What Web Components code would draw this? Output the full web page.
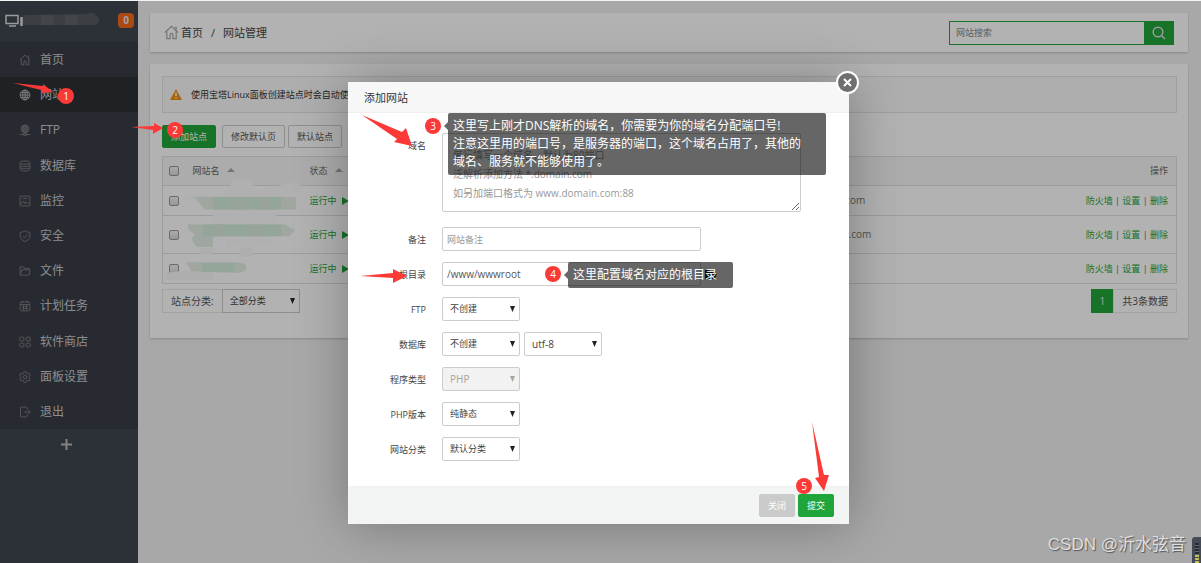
<!DOCTYPE html>
<html lang="zh-CN">
<head>
<meta charset="utf-8">
<title>网站管理</title>
<style>
html,body{margin:0;min-height:100%}
body{font-family:"Open Sans","Noto Sans CJK SC",sans-serif;font-size:9px;color:#333;background:#f1f1f1}
</style>
</head>
<body>
<bt-app></bt-app>
<script>
const define = (name, html, setup) => customElements.define(name, class extends HTMLElement {
  connectedCallback() {
    if (this.shadowRoot) return;
    const t = document.createElement('template');
    t.innerHTML = html;
    this.attachShadow({mode: 'open'}).append(t.content.cloneNode(true));
    if (setup) setup(this, this.shadowRoot);
  }
});

const icons = {
  home: '<path d="M1 8 8 1.500l7 6.500M3 7v7.500h3.500V10.500a1.500 1.500 0 0 1 3 0v4H13V7M11.500 2.500h1.500v2.500"/>',
  globe: '<circle cx="8" cy="8" r="6.500"/><ellipse cx="8" cy="8" rx="3" ry="6.500"/><path d="M1.500 8h13M8 1.500v13M2.500 4.800h11M2.500 11.200h11"/>',
  ftp: '<circle cx="8" cy="6.500" r="5.200"/><ellipse cx="8" cy="6.500" rx="2.400" ry="5.200"/><path d="M3 6.500h10M8 1.500v12M3.500 4h9M3.500 9h9M1 14h5M10 14h5M6 13h4v2H6z"/>',
  data: '<ellipse cx="8" cy="3.500" rx="6.500" ry="2.300"/><path d="M1.500 3.500v9c0 3 13 3 13 0v-9M1.500 6.500c0 3 13 3 13 0M1.500 9.500c0 3 13 3 13 0"/>',
  monitor: '<path d="M1.500 1.500h13v13h-13zM5 4.500h6M1.500 11h3l1.500-3 2 4 2-3 1.500 2h3"/>',
  shield: '<path d="M8 1c2 1.500 4 2 6.500 2v5c0 3.500-2.500 5.500-6.500 7.500C4 13.500 1.500 11.500 1.500 8V3C4 3 6 2.500 8 1zM5 8l2.300 2.300L11.500 6"/>',
  folder: '<path d="M1.500 13.500v-11h4.500l1.500 2h6v2M1.500 13.500l2.300-7h11l-1.300 7z"/>',
  calendar: '<rect x="1.500" y="2.500" width="13" height="12" rx="2"/><path d="M1.500 6h13M5 1v3M11 1v3M4 8.500h8M4 11.500h8M6 7v6M10 7v6"/>',
  grid: '<rect x="1" y="1.500" width="5.500" height="5" rx="1"/><rect x="9.500" y="1.500" width="5.500" height="5" rx="1"/><rect x="1" y="9.500" width="5.500" height="5" rx="1"/><rect x="9.500" y="9.500" width="5.500" height="5" rx="1"/>',
  gear: '<circle cx="8" cy="8" r="2.300"/><path d="M6.500 1h3l.5 2 1.600.8 1.900-1 1.500 2.500L13.500 7v2l1.500 1.700-1.500 2.500-1.900-1L10 13l-.5 2h-3L6 13l-1.600-.8-1.900 1L1 10.700 2.500 9V7L1 5.300l1.500-2.500 1.900 1L6 3z"/>',
  exit: '<path d="M11 5V2.500a1 1 0 0 0-1-1H3a1 1 0 0 0-1 1v11a1 1 0 0 0 1 1h7a1 1 0 0 0 1-1V11M6.500 8H15M12.500 5.500 15 8l-2.500 2.500"/>'
};

define('bt-icon', `<style>
:host{display:inline-flex;width:12px;height:12px;flex:none}
svg{width:100%;height:100%;fill:none;stroke:currentColor;stroke-width:1.300}
</style><svg viewBox="0 0 16 16" aria-hidden="true"></svg>`, (el, r) => {
  r.querySelector('svg').innerHTML = icons[el.getAttribute('name')];
});

define('bt-menu-item', `<style>
:host{display:grid}
a{display:flex;align-items:center;gap:9px;min-height:34px;padding:1px 0 0 19px;color:#c8cace;font-size:12px;line-height:18px;text-decoration:none;background:#383d46}
bt-icon{color:#777b80}
:host([active]) a{background:#2c3136}
:host([active]) bt-icon{color:#b0b3b6}
</style><a href="#"><slot></slot></a>`, (el, r) => {
  const icon = document.createElement('bt-icon');
  icon.setAttribute('name', el.getAttribute('icon'));
  r.querySelector('a').prepend(icon);
});

define('bt-sidebar', `<style>
:host{display:block;background:#40464f;color:#fff}
header{display:flex;align-items:center;height:41px;padding:0 4px 3px 5px;box-sizing:border-box}
.pc{width:20px;height:15px;flex:none}
.mask{width:76px;height:15px;margin-left:-2px}
.badge{margin-left:auto;width:16px;height:15px;border-radius:4px;background:#f5691f;color:#e8e8e8;font-weight:700;font-size:10px;line-height:15px;text-align:center}
nav{display:grid;grid-auto-rows:1fr;min-height:387px}
button{display:block;width:100%;height:32px;padding:0 6px 0 0;border:0;background:none;color:#bbb}
button svg{width:11px;height:11px}
</style>
<header>
<svg class="pc" viewBox="0 0 20 15" fill="none" stroke="#ddd"><path d="M1 2.500h12v8H1zM4 13h7" stroke-width="1.500"/><path d="M16.500 4v9" stroke-width="2.500"/></svg>
<svg class="mask" viewBox="0 0 76 15"><path fill="#555b62" d="M0 2 64 1q1-4 4-4t4 5q4 1 4 5t-4 5H0z"/><path fill="#666b70" d="M18 2h12v10H18zM42 2h12v10H42z" opacity=".6"/></svg>
<span class="badge">0</span>
</header>
<nav>
<bt-menu-item icon="home">首页</bt-menu-item>
<bt-menu-item icon="globe" active>网站</bt-menu-item>
<bt-menu-item icon="ftp">FTP</bt-menu-item>
<bt-menu-item icon="data">数据库</bt-menu-item>
<bt-menu-item icon="monitor">监控</bt-menu-item>
<bt-menu-item icon="shield">安全</bt-menu-item>
<bt-menu-item icon="folder">文件</bt-menu-item>
<bt-menu-item icon="calendar">计划任务</bt-menu-item>
<bt-menu-item icon="grid">软件商店</bt-menu-item>
<bt-menu-item icon="gear">面板设置</bt-menu-item>
<bt-menu-item icon="exit">退出</bt-menu-item>
</nav>
<button aria-label="更多"><svg viewBox="0 0 11 11"><path d="M0 5.500h11M5.500 0v11" stroke="currentColor" stroke-width="2"/></svg></button>`);

define('bt-button', `<style>
:host{display:inline-flex}
button{height:23px;padding:0 8px;border:1px solid #ccc;border-radius:2px;background:#fff;color:#555;font:inherit;line-height:14px;white-space:nowrap}
:host([kind=primary]) button{background:#20a53a;border-color:#20a53a;color:#fff}
:host([kind=muted]) button{background:#cbcbcb;border-color:#cbcbcb;color:#fff}
</style><button type="button"><slot></slot></button>`);

define('bt-select', `<style>
:host{display:inline-grid;position:relative;width:78px;height:24px}
select{appearance:none;width:100%;height:100%;box-sizing:border-box;padding:0 16px 0 7px;border:1px solid #ccc;border-radius:2px;background:#fff;color:#444;font:inherit;line-height:16px;opacity:1}
select:disabled{background:#f2f2f2;color:#aaa69c}
:host([latin]) select{font-size:10px}
:host([square]) select{border-radius:0;border-color:#ccc}
svg{position:absolute;right:5px;top:9px;width:5px;height:6px;fill:#222;pointer-events:none}
:host([disabled]) svg{fill:#aaa69c}
</style><select><option></option></select><svg viewBox="0 0 5 6"><path d="M0 0h5L2.500 6z"/></svg>`, (el, r) => {
  const s = r.querySelector('select');
  s.options[0].textContent = el.getAttribute('value');
  s.setAttribute('aria-label', el.getAttribute('label'));
  s.disabled = el.hasAttribute('disabled');
});

define('bt-topbar', `<style>
:host{display:flex;align-items:center;justify-content:space-between;height:39px;padding:0 14px;background:#fff;box-shadow:0 1px 2px #0003}
nav{display:flex;align-items:center;font-size:11px;line-height:16px;color:#444}
nav a{color:inherit;text-decoration:none}
nav bt-icon{width:15px;height:15px;color:#aaa;margin-right:2px}
nav i{font-style:normal;margin:0 8px}
form{display:flex;height:24px}
input{width:195px;box-sizing:border-box;border:1px solid #20a53a;border-right:0;padding:0 6px;background:#fff;font:inherit;border-radius:0}
input::placeholder{color:#888}
button{width:30px;border:0;padding:0;background:#20a53a;display:grid;place-items:center}
button svg{width:14px;height:14px;fill:none;stroke:#ddd;stroke-width:1.500}
</style>
<nav><bt-icon name="home"></bt-icon><a href="#">首页</a><i>/</i><a href="#">网站管理</a></nav>
<form><input type="text" placeholder="网站搜索" aria-label="网站搜索"><button type="button" aria-label="搜索"><svg viewBox="0 0 14 14"><circle cx="6" cy="6" r="4.800"/><path d="m9.500 9.500 3.500 3.500"/></svg></button></form>`);

const row = (cls, blob, pad, link) => `<tr class="${cls}"><td><input type="checkbox" aria-label="选择网站"></td><td>${blob}</td>
<td><a class="run" href="#">运行中<svg class="play" viewBox="0 0 7 8"><path d="M0 0l7 4-7 4z"/></svg></a></td>
<td><span style="padding-left:${pad}px" class="note">${link}</span></td>
<td class="ops"><a href="#">防火墙</a> | <a href="#">设置</a> | <a href="#">删除</a></td></tr>`;
const blob1 = '<svg class="blob" viewBox="0 0 120 30"><path fill="#fcfcfc" d="M-14 10 30 8 45-8 62-6 68 4 110-5 118-2 112 24 60 28 20 26 0 16z"/><path fill="#e4f0e6" d="M0 11h112v14H10z"/><path fill="#d5eedb" d="M20 11h76v14H20z"/><path fill="#dbe9de" d="M44 11h12v14H44zM72 11h12v14H72z"/></svg>';
const blob2 = '<svg class="blob" viewBox="0 0 120 30"><path fill="#fcfcfc" d="M20-8h70v10H20zM35 20h50v8H35z"/><path fill="#e4f0e6" d="M-8 4 100 4l11 6-6 7H20v12H2L-4 20l4-5-8-6z"/><path fill="#d5eedb" d="M8 4h88v13H8z"/><path fill="#dbe9de" d="M20 4h12v13H20zM62 4h12v13H62z"/></svg>';
const blob3 = '<svg class="blob" viewBox="0 0 120 30"><path fill="#f8faf8" d="M5-8h15v8H5zM50-8h15v10H50zM-34 20 20 14v14h-50z"/><path fill="#e4f0e6" d="M-10 8 44 8q14 0 13 6 0 6-12 6L-4 18z"/><path fill="#d5eedb" d="M8 9h36v10H8z"/></svg>';

define('bt-site-table', `<style>
:host{display:block}
table{width:100%;table-layout:fixed;border-collapse:collapse;border:1px solid #e0e0e0;line-height:14px;color:#666}
th{height:28px;background:#f6f6f6;font-weight:400;text-align:left;padding:0}
td{padding:0;height:29px;border-top:1px solid #e0e0e0}
.tall td{height:37px}
th:first-child,td:first-child{padding-left:6px}
input{display:block;width:10px;height:10px;margin:0;appearance:none;box-sizing:border-box;border:1px solid #999;border-radius:2px;background:linear-gradient(#f4f4f4,#d8d8d8)}
a{color:#20a53a;text-decoration:none}
.ops{text-align:right;padding-right:8px;white-space:nowrap}
.note{font-size:10px;color:#777}
.play{width:7px;height:8px;fill:#20a53a;margin-left:5px;vertical-align:-1px}
.sort{width:8px;height:4px;fill:#aaa;margin-left:7px;vertical-align:2px}
.blob{display:block;width:112px;height:27px;overflow:visible}
col:nth-child(1){width:30px}col:nth-child(2){width:117px}col:nth-child(3){width:391px}col:nth-child(5){width:120px}
</style>
<table><colgroup><col><col><col><col><col></colgroup><thead><tr><th><input type="checkbox" aria-label="全选"></th><th>网站名<svg class="sort" viewBox="0 0 8 4"><path d="M0 4 4 0l4 4z"/></svg></th><th>状态<svg class="sort" viewBox="0 0 8 4"><path d="M0 4 4 0l4 4z"/></svg></th><th></th><th class="ops">操作</th></tr></thead>
<tbody>${row('', blob1, 142, '.com')}${row('tall', blob2, 148, '.com')}${row('', blob3, 0, '')}</tbody></table>`);

define('bt-sites', `<style>
:host{display:block;padding:12px 11px 25px 12px;background:#fff;box-shadow:0 1px 2px #0003}
.alert{display:flex;align-items:center;gap:9px;height:35px;padding-left:7px;border:1px solid #e4e4e4;background:#f9f9f9;line-height:14px;color:#333}
.alert svg{width:12px;height:11px}
.bar{display:flex;margin:12px 0 8px}
.bar bt-button{margin-right:3px}
.bar bt-button:first-child{margin-right:6px}
footer{display:flex;justify-content:space-between;margin-top:5px;font-size:10px;line-height:14px}
footer div{display:flex;height:24px}
footer span{box-sizing:border-box;border:1px solid #e8e8e8;padding:4px 8px;color:#555}
footer bt-select{font-size:9px;margin-left:-1px}
footer .page{background:#20a53a;border-color:#20a53a;color:#eee;text-decoration:none;width:22px;text-align:center;line-height:24px}
</style>
<div class="alert"><svg viewBox="0 0 12 11"><path fill="#f0930e" d="M6 0 12 11H0z"/><path stroke="#fff" stroke-width="1.400" d="M6 3.500v3.500M6 8.200v1.300"/></svg>使用宝塔Linux面板创建站点时会自动使用</div>
<div class="bar"><bt-button kind="primary">添加站点</bt-button><bt-button>修改默认页</bt-button><bt-button>默认站点</bt-button></div>
<bt-site-table></bt-site-table>
<footer><div><span>站点分类:</span><bt-select square value="全部分类" label="站点分类"></bt-select></div><div><a class="page" href="#">1</a><span>共3条数据</span></div></footer>`);

define('bt-dialog', `<style>
:host{display:block;position:relative;width:501px;background:#fff;box-shadow:1px 1px 50px rgba(0,0,0,.3)}
header{height:31px;box-sizing:border-box;padding:0 16px;background:#f7f7f7;border-bottom:1px solid #eee;font-size:11px;line-height:32px;color:#333}
form{display:grid;grid-template-columns:78px 1fr;column-gap:16px;row-gap:11px;padding:20px 48px 25px 0}
label{text-align:right;line-height:26px;height:24px;color:#444}
textarea,input{box-sizing:border-box;border:1px solid #ccc;border-radius:2px;background:#fff;color:#555;font:inherit;display:block}
textarea{width:100%;height:79px;padding:12px 10px;font-size:10px;line-height:19px;margin-bottom:4px;overflow:hidden}
input{width:259px;height:24px;padding:0 4px}
.root{font-size:10px}
::placeholder{color:#999;opacity:1}
.row{display:flex;gap:4px;align-items:center}
.row svg{width:12px;height:10px;fill:#222}
footer{display:flex;justify-content:flex-end;gap:3px;height:38px;box-sizing:border-box;padding:7px 15px 0;background:#f3f5f5;border-top:1px solid #edf1f2}
.close{position:absolute;right:-10px;top:-11px;width:23px;height:23px;padding:0;border:2px solid #fff;border-radius:50%;background:#6f6f6f;display:grid;place-items:center}
.close svg{width:9px;height:9px;stroke:#fff;stroke-width:2}
</style>
<header>添加网站</header>
<form>
<label for="d">域名</label><textarea id="d" placeholder="每行填写一个域名，默认为80端口&#10;泛解析添加方法 *.domain.com&#10;如另加端口格式为 www.domain.com:88"></textarea>
<label for="n">备注</label><input id="n" type="text" placeholder="网站备注">
<label for="r">根目录</label><div class="row"><input class="root" id="r" type="text" value="/www/wwwroot"><svg viewBox="0 0 12 10"><path d="M0 1h4l1 1.500h5V4h2l-2 6H0z"/></svg></div>
<label>FTP</label><bt-select value="不创建" label="FTP"></bt-select>
<label>数据库</label><div class="row"><bt-select value="不创建" label="数据库"></bt-select><bt-select latin value="utf-8" label="编码"></bt-select></div>
<label>程序类型</label><bt-select latin disabled value="PHP" label="程序类型"></bt-select>
<label>PHP版本</label><bt-select value="纯静态" label="PHP版本"></bt-select>
<label>网站分类</label><bt-select value="默认分类" label="网站分类"></bt-select>
</form>
<footer><bt-button kind="muted">关闭</bt-button><bt-button kind="primary">提交</bt-button></footer>
<button class="close" aria-label="关闭"><svg viewBox="0 0 9 9"><path d="m1 1 7 7M8 1 1 8"/></svg></button>`);

define('bt-pin', `<style>
:host{position:absolute;width:16px;height:16px;border-radius:50%;background:#fb3936;color:#fff;font-size:10px;line-height:16px;text-align:center}
</style><slot></slot>`);

define('bt-callout', `<style>
:host{position:absolute;box-sizing:border-box;padding:4px 5px;background:rgba(0,0,0,.6);border-radius:2px;color:#fff;font-size:12px;line-height:18px}
:host::before{content:"";position:absolute;left:-4px;top:9px;border:4px solid transparent;border-left:0;border-right-color:rgba(0,0,0,.6)}
</style><slot></slot>`);

define('bt-notes', `<style>
:host{position:absolute;inset:0;overflow:hidden;pointer-events:none}
svg.arrows{position:absolute;left:0;top:0;width:850px;height:500px;fill:#fb3936}
.mark{position:absolute;right:15px;bottom:6px;font:17px/24px "Liberation Sans","Noto Sans CJK SC",sans-serif;color:#dedede;text-shadow:1px 1px 1px #555;white-space:nowrap}
.meter{position:absolute;right:0;bottom:0;width:9px;height:26px;border-radius:3px 0 0 0;background:#454a57}
.meter i{display:block;width:4px;height:20px;margin:6px 0 0 3px;background:repeating-linear-gradient(#252a30 0 2px,#666b70 2px 3px)}
.meter i::after{content:"";display:block;height:8px;width:4px;position:relative;top:12px;background:repeating-linear-gradient(#bfc050 0 2px,#454a57 2px 3px)}
</style>
<svg class="arrows" viewBox="0 0 850 500" aria-hidden="true">
<path d="M13 83 43 86 43 84 53 92 41 93 41 90z"/>
<path d="M131 127 154 126V123L163 128 153 134V130z"/>
<path d="M362 115 402 132 406 128 412 146 394 142 397 139z"/>
<path d="M360 276 393 273V269L407 276 393 283V278z"/>
<path d="M812 422 824 475 829 475 824 491 815 478 819 477z"/>
</svg>
<bt-pin style="left:58px;top:88px">1</bt-pin>
<bt-pin style="left:167px;top:122px">2</bt-pin>
<bt-pin style="left:425px;top:118px">3</bt-pin>
<bt-pin style="left:545px;top:266px">4</bt-pin>
<bt-pin style="left:796px;top:478px">5</bt-pin>
<bt-callout style="left:448px;top:113px;width:378px">这里写上刚才DNS解析的域名，你需要为你的域名分配端口号!<br>注意这里用的端口号，是服务器的端口，这个域名占用了，其他的<br>域名、服务就不能够使用了。</bt-callout>
<bt-callout style="left:568px;top:262px;width:165px">这里配置域名对应的根目录</bt-callout>
<span class="mark">CSDN @沂水弦音</span>
<div class="meter"><i></i></div>`);

define('bt-app', `<style>
:host{display:grid;grid-template-columns:138px 1fr;min-height:100vh;box-sizing:border-box;border-top:1px solid #f4f4f4;position:relative}
main{display:flex;flex-direction:column;gap:12px;padding:12px 13px 12px 12px;min-width:0}
.shade{position:absolute;inset:0;background:rgba(0,0,0,.3);display:flex;justify-content:center;align-items:flex-start;padding:81px 4px 0 0;overflow:hidden}
</style>
<bt-sidebar></bt-sidebar>
<main><bt-topbar></bt-topbar><bt-sites></bt-sites></main>
<div class="shade"><bt-dialog></bt-dialog></div>
<bt-notes style="top:-1px"></bt-notes>`);
</script>
</body>
</html>
